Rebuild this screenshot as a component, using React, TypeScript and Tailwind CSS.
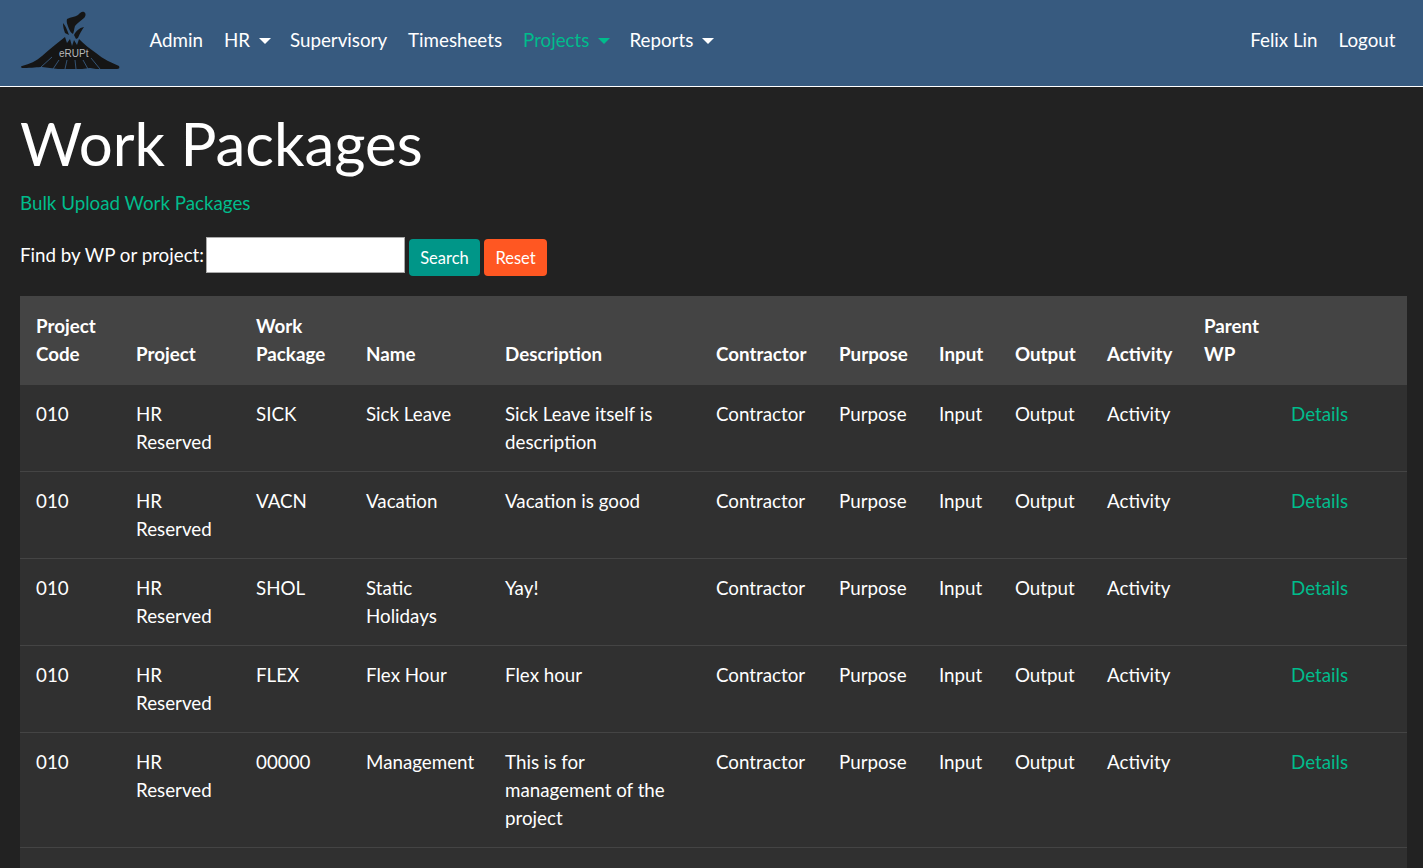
const rows = [
  ["SICK", "Sick Leave", "Sick Leave itself is description"],
  ["VACN", "Vacation", "Vacation is good"],
  ["SHOL", "Static Holidays", "Yay!"],
  ["FLEX", "Flex Hour", "Flex hour"],
  ["00000", "Management", "This is for management of the project"],
];

const widths = [100, 120, 110, 139, 211, 123, 100, 76, 92, 97, 87, 132];

const headers = ["Project Code", "Project", "Work Package", "Name", "Description", "Contractor", "Purpose", "Input", "Output", "Activity", "Parent WP", ""];

function Logo() {
  return (
    <svg width="100" height="60" viewBox="0 0 100 60" className="shrink-0">
      {/* plume */}
      <path fill="#151515" d="M47 9 C51 7 55 7 58 5 C60 3 62 1 64 2 C66 3 66 6 64 8 C61 11 57 13 55 16 C54 19 54 22 53 24 C51 23 50 21 49 19 C48 16 46 12 47 9Z" />
      <path fill="#151515" d="M43 13 C45 15 47 19 49 25 L45 23 C44 20 43 17 43 13Z" />
      <path fill="#151515" d="M54 25 C56 21 59 18 64 17 C62 20 60 23 58 28 L56 29Z" />
      {/* cone */}
      <path
        fill="#151515"
        d="M45 27 L47 33 L50 29 L52 36 L54 30 L57 35 L59 29 C64 34 70 39 76 43 C83 49 92 53 99 56 C100 58 99 59 97 59 L76 59 L70 58 L62 59 L54 59 L46 59 L38 59 L30 58 L22 57 C18 57 12 58 3 58 C1 58 0 57 2 56 C10 54 16 51 22 46 C29 40 37 33 45 27Z"
      />
      <path fill="none" stroke="#375a7f" strokeWidth="0.9" d="M32 47 L21 57 M39 50 L33 59 M47 50 L45 59 M55 50 L56 59 M63 50 L68 59 M71 48 L80 59" />
      <text x="39" y="47" fontSize="10" fill="#b8b8b8" fontFamily="'Liberation Sans', sans-serif">
        eRUPt
      </text>
    </svg>
  );
}

function NavItem({ label, caret, active }: { label: string; caret?: boolean; active?: boolean }) {
  return (
    <a className={`flex items-center px-[10.5px] ${active ? "text-[#00bc8c]" : "text-white"}`}>
      {label}
      {caret && <span className="ml-[9px] mr-[-2px] mt-[1px] border-x-[6px] border-t-[6px] border-x-transparent border-t-current" />}
    </a>
  );
}

const cell = "px-4 py-[15px] align-top";

export default function App() {
  return (
    <div className="h-[868px] overflow-hidden bg-[#222222] text-[18.75px] leading-[28px] text-white font-['Lato','Liberation_Sans',sans-serif]">
      <nav className="flex h-[87px] items-center border-b border-white bg-[#375a7f] pb-[6px] pl-5 pr-[17px]">
        <Logo />
        <div className="ml-[19px] flex">
          <NavItem label="Admin" />
          <NavItem label="HR" caret />
          <NavItem label="Supervisory" />
          <NavItem label="Timesheets" />
          <NavItem label="Projects" caret active />
          <NavItem label="Reports" caret />
        </div>
        <div className="ml-auto flex">
          <NavItem label="Felix Lin" />
          <NavItem label="Logout" />
        </div>
      </nav>
      <main className="pl-5 pr-4">
        <h1 className="mt-[20px] text-[60px] leading-[72px]">Work Packages</h1>
        <a className="mt-[10px] block text-[#00bc8c]">Bulk Upload Work Packages</a>
        <div className="mt-[20px] flex items-start">
          <span className="mt-[4px]">Find by WP or project:</span>
          <input className="ml-[2px] h-[36px] w-[199px] border border-[#aaaaaa] bg-white" />
          <button className="ml-[4px] mt-[2px] h-[37px] w-[71px] rounded-[4px] bg-[#009688] text-[16.5px] text-white">Search</button>
          <button className="ml-[4px] mt-[2px] h-[37px] w-[63px] rounded-[4px] bg-[#ff5722] text-[16.5px] text-white">Reset</button>
        </div>
        <table className="mt-[20px] w-full table-fixed border-collapse">
          <colgroup>
            {widths.map((w, i) => (
              <col key={i} width={w} />
            ))}
          </colgroup>
          <thead>
            <tr className="bg-[#444444]">
              {headers.map((h, i) => (
                <th key={i} className="px-4 pt-[16px] pb-[17px] text-left align-bottom font-bold">
                  {h}
                </th>
              ))}
            </tr>
          </thead>
          <tbody>
            {rows.map(([wp, name, desc]) => (
              <tr key={wp} className="border-b border-[#444444] bg-[#303030]">
                <td className={cell}>010</td>
                <td className={cell}>HR Reserved</td>
                <td className={cell}>{wp}</td>
                <td className={cell}>{name}</td>
                <td className={cell}>{desc}</td>
                <td className={cell}>Contractor</td>
                <td className={cell}>Purpose</td>
                <td className={cell}>Input</td>
                <td className={cell}>Output</td>
                <td className={cell}>Activity</td>
                <td className={cell}></td>
                <td className={`${cell} text-[#00bc8c]`}>Details</td>
              </tr>
            ))}
            <tr className="bg-[#303030]">
              <td colSpan={12} className="h-[87px]"></td>
            </tr>
          </tbody>
        </table>
      </main>
    </div>
  );
}
